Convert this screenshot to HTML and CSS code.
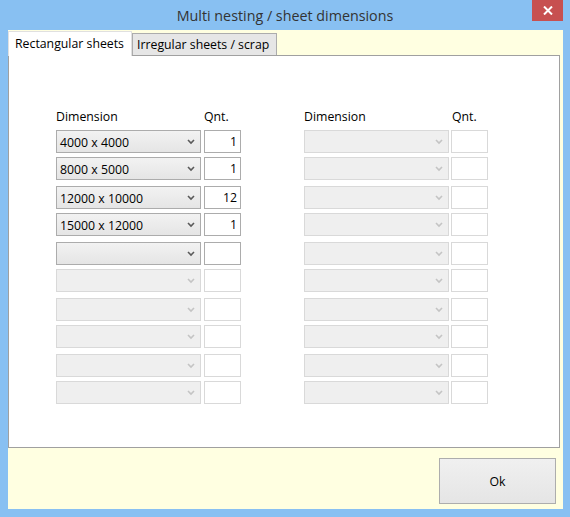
FILE: index.html
```html
<!DOCTYPE html>
<html lang="en">
<head>
  <meta charset="UTF-8">
  <title>Multi nesting / sheet dimensions</title>
  <link rel="stylesheet" href="styles.css">
</head>
<body>

<div class="window">
  <div class="titlebar">
    <div class="title">Multi nesting / sheet dimensions</div>
    <div class="close-btn">
      <svg width="10" height="9" viewBox="0 0 10 9">
        <path d="M1 0.5 L9 8.5 M9 0.5 L1 8.5" stroke="#fff" stroke-width="2" fill="none"/>
      </svg>
    </div>
  </div>

  <div class="client">
    <div class="tabs">
      <div class="tab active">Rectangular sheets</div>
      <div class="tab">Irregular sheets / scrap</div>
    </div>

    <div class="panel">
      <div class="column" id="colLeft">
        <div class="header">
          <span class="label-dim">Dimension</span>
          <span class="label-qnt">Qnt.</span>
        </div>
      </div>
      <div class="column right" id="colRight">
        <div class="header">
          <span class="label-dim">Dimension</span>
          <span class="label-qnt">Qnt.</span>
        </div>
      </div>
    </div>

    <div class="footer">
      <button class="ok-btn">Ok</button>
    </div>
  </div>
</div>

<script>
  // rows: [dimension, qnt, enabled]
  const leftRows = [
    ['4000 x 4000', '1', true],
    ['8000 x 5000', '1', true],
    ['12000 x 10000', '12', true],
    ['15000 x 12000', '1', true],
    ['', '', true],
    ['', '', false],
    ['', '', false],
    ['', '', false],
    ['', '', false],
    ['', '', false]
  ];
  const rightRows = leftRows.map(() => ['', '', false]);

  const chevron = '<svg width="8" height="6" viewBox="0 0 8 6"><path d="M1 1 L4 4 L7 1" stroke="currentColor" stroke-width="1.6" fill="none"/></svg>';

  function fillColumn(col, rows) {
    for (let i = 0; i < rows.length; i += 2) {
      const pair = document.createElement('div');
      pair.classList.add('pair');
      for (let j = i; j < i + 2; j++) {
        const [dim, qnt, enabled] = rows[j];
        const row = document.createElement('div');
        row.classList.add('row');
        if (!enabled) row.classList.add('disabled');
        row.innerHTML =
          '<div class="combo"><span class="combo-text">' + dim + '</span>' +
          '<span class="chevron">' + chevron + '</span></div>' +
          '<div class="qnt">' + qnt + '</div>';
        pair.appendChild(row);
      }
      col.appendChild(pair);
    }
  }

  fillColumn(document.getElementById('colLeft'), leftRows);
  fillColumn(document.getElementById('colRight'), rightRows);
</script>

</body>
</html>
```

FILE: styles.css
```css
body {
  margin: 0;
  font-family: 'Open Sans', 'Noto Sans', sans-serif;
  font-size: 12.3px;
  color: #000;
}

.window {
  width: 570px;
  height: 517px;
  background-color: #88c0f2;
  display: flex;
  flex-direction: column;
  box-sizing: border-box;
}

.titlebar {
  height: 30px;
  position: relative;
  flex-shrink: 0;
}

.title {
  text-align: center;
  font-size: 14.3px;
  line-height: 30px;
  color: #333;
  padding-top: 1px;
}

.close-btn {
  position: absolute;
  top: 0;
  right: 7px;
  width: 31px;
  height: 21px;
  background-color: #c75050;
  display: flex;
  align-items: center;
  justify-content: center;
}

.client {
  flex: 1;
  margin: 0 7px 8px 8px;
  background-color: #ffffe1;
  display: flex;
  flex-direction: column;
}

.tabs {
  height: 25px;
  display: flex;
  align-items: flex-end;
  flex-shrink: 0;
}

.tab {
  height: 22px;
  line-height: 21px;
  box-sizing: border-box;
  padding: 0 4px;
  width: 145px;
  white-space: nowrap;
  background-color: #e6e6e6;
  border: 1px solid #acacac;
  border-bottom: none;
  color: #000;
}

.tab.active {
  width: 124px;
  height: 25px;
  line-height: 23px;
  padding: 0 6px;
  background-color: #fff;
  border-color: #e0e0e0;
  margin-bottom: -1px;
  position: relative;
  z-index: 1;
}

.panel {
  height: 393px;
  box-sizing: border-box;
  margin-right: 3px;
  background-color: #fff;
  border: 1px solid #a0a0a0;
  display: flex;
  gap: 63px;
  padding: 52px 0 0 47px;
  flex-shrink: 0;
}

.column {
  width: 185px;
  display: flex;
  flex-direction: column;
  gap: 6px;
}

.header {
  display: flex;
  height: 16px;
  line-height: 17px;
}

.label-dim {
  width: 148px;
}

.pair {
  display: flex;
  flex-direction: column;
  gap: 4px;
}

.row {
  display: flex;
  gap: 3px;
  height: 23px;
}

.column.right .row {
  gap: 2px;
}

.combo {
  width: 145px;
  box-sizing: border-box;
  border: 1px solid #acacac;
  background: linear-gradient(#f2f2f2, #e5e5e5);
  display: flex;
  align-items: center;
  padding: 0 5px 0 3px;
}

.combo-text {
  flex: 1;
  padding-top: 1px;
  white-space: nowrap;
}

.chevron {
  display: flex;
  color: #5a5a5a;
  padding-top: 1px;
}

.qnt {
  width: 37px;
  box-sizing: border-box;
  border: 1px solid #acacac;
  background-color: #fff;
  text-align: right;
  line-height: 22px;
  padding-right: 3px;
}

.row.disabled .combo {
  background: #efefef;
  border-color: #d9d9d9;
}

.row.disabled .chevron {
  color: #c4c4c4;
}

.row.disabled .qnt {
  border-color: #d9d9d9;
}

.footer {
  flex: 1;
  display: flex;
  justify-content: flex-end;
  align-items: flex-end;
  padding: 0 7px 5px 0;
}

.ok-btn {
  width: 117px;
  height: 46px;
  border: 1px solid #adadad;
  background: linear-gradient(#f0f0f0, #e5e5e5);
  font-family: 'Open Sans', 'Noto Sans', sans-serif;
  font-size: 12.3px;
  color: #000;
  padding: 0;
}
```
